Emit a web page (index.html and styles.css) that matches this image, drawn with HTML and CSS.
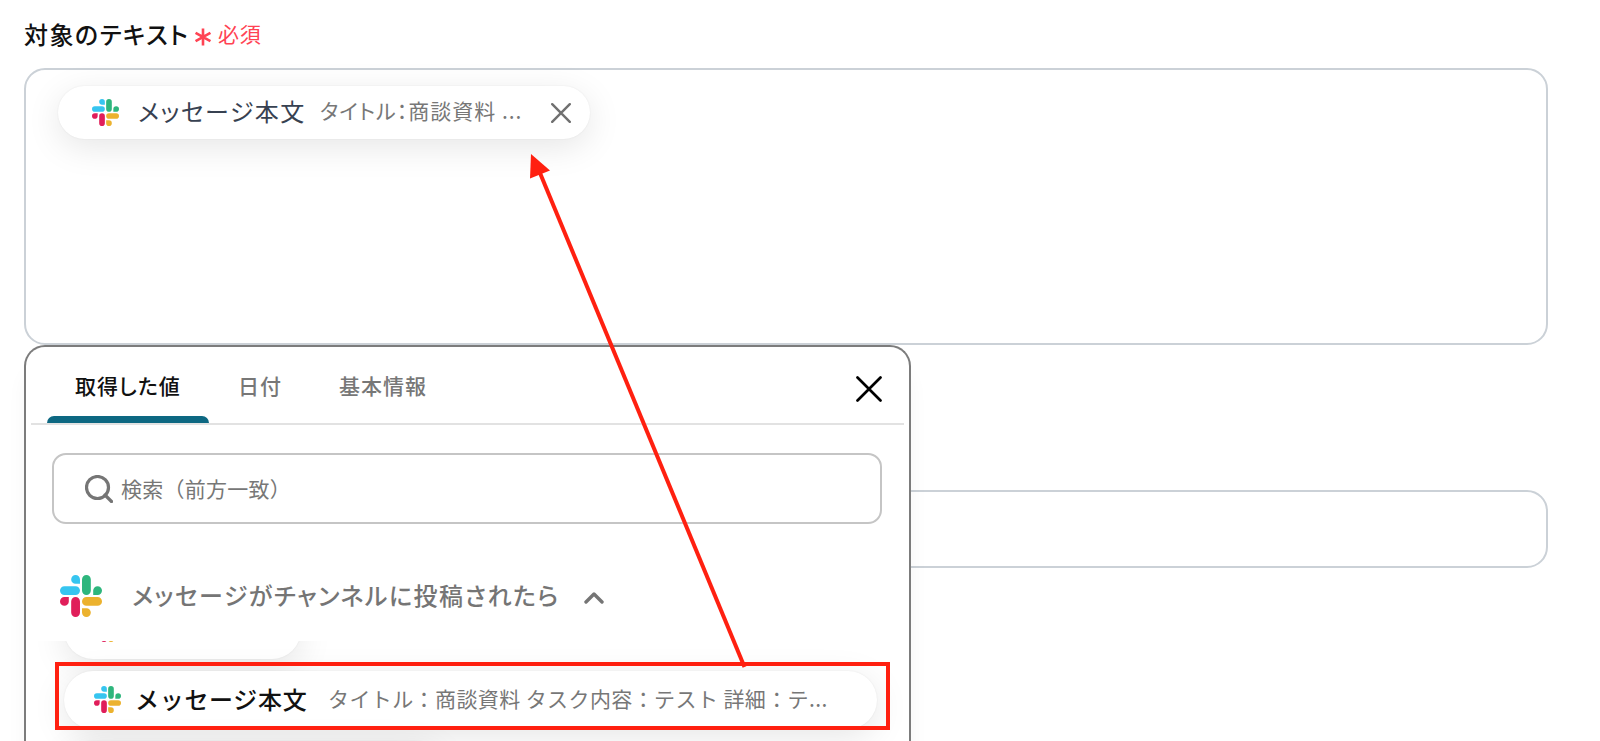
FILE: index.html
```html
<!DOCTYPE html>
<html lang="ja">
<head>
    <meta charset="UTF-8">
    <meta name="viewport" content="width=device-width, initial-scale=1.0">
    <title>対象のテキスト</title>
    <link rel="stylesheet" href="styles.css">
</head>
<body>
    <!-- Shared icons -->
    <svg class="symbols" width="0" height="0">
        <symbol id="slack" viewBox="0 0 124 124">
            <path fill="#E01E5A" d="M26 78a13 13 0 1 1-13-13h13zM33 78a13 13 0 0 1 26 0v33a13 13 0 0 1-26 0z"/>
            <path fill="#36C5F0" d="M46 26a13 13 0 1 1 13-13v13zM46 33a13 13 0 0 1 0 26H13a13 13 0 0 1 0-26z"/>
            <path fill="#2EB67D" d="M98 46a13 13 0 1 1 13 13H98zM91 46a13 13 0 0 1-26 0V13a13 13 0 0 1 26 0z"/>
            <path fill="#ECB22E" d="M78 98a13 13 0 1 1-13 13V98zM78 91a13 13 0 0 1 0-26h33a13 13 0 0 1 0 26z"/>
        </symbol>
    </svg>

    <main class="form">
        <div class="field-label">
            <span class="label-text">対象のテキスト</span>
            <svg class="asterisk" viewBox="0 0 16 18"><path d="M8 .5v17M.6 4.800l14.800 8.400M15.400 4.800l-14.800 8.400"/></svg>
            <span class="required">必須</span>
        </div>

        <div class="text-field">
            <div class="chip">
                <svg class="chip-icon"><use href="#slack"/></svg>
                <span class="chip-name">メッセージ本文</span>
                <span class="chip-value">タイトル：商談資料 ...</span>
                <svg class="chip-close" viewBox="0 0 20 20"><path d="M1.2 1.2l17.6 17.6M18.8 1.2L1.2 18.8"/></svg>
            </div>
        </div>

        <div class="input-field"></div>

        <!-- Value picker -->
        <div class="picker">
            <div class="tabs">
                <div class="tab active">取得した値</div>
                <div class="tab tab-date">日付</div>
                <div class="tab tab-basic">基本情報</div>
                <svg class="picker-close" viewBox="0 0 26 26"><path d="M1.5 1.5l23 23M24.5 1.5l-23 23"/></svg>
            </div>

            <div class="search">
                <svg class="search-icon" viewBox="0 0 28 28"><circle cx="12.5" cy="12.5" r="11"/><path d="M20 20l6.500 6.500"/></svg>
                <span class="search-text">検索（前方一致）</span>
            </div>

            <div class="group">
                <svg class="group-icon"><use href="#slack"/></svg>
                <span class="group-name">メッセージがチャンネルに投稿されたら</span>
                <svg class="chevron" viewBox="0 0 20 12"><path d="M2 10l8-8 8 8"/></svg>
            </div>

            <div class="values">
                <div class="value value-previous">
                    <svg class="chip-icon"><use href="#slack"/></svg>
                </div>
                <div class="value">
                    <svg class="chip-icon"><use href="#slack"/></svg>
                    <span class="value-name">メッセージ本文</span>
                    <span class="value-text">タイトル：商談資料 タスク内容：テスト 詳細：テ...</span>
                </div>
                <div class="value value-next"></div>
            </div>
        </div>
    </main>

    <!-- Annotations -->
    <div class="highlight"></div>
    <svg class="arrow" viewBox="0 0 1600 741">
        <path class="arrow-line" d="M540 173L744.5 667"/>
        <path class="arrow-head" d="M531 154l19 16.500-20 8z"/>
    </svg>
</body>
</html>
```

FILE: styles.css
```css
* {
    margin: 0;
    padding: 0;
    box-sizing: border-box;
}

body {
    position: relative;
    height: 741px;
    overflow: hidden;
    background-color: #fff;
    font-family: 'Noto Sans CJK JP', sans-serif;
    color: #111;
}

svg {
    display: block;
    flex-shrink: 0;
    fill: none;
    stroke-linecap: round;
    stroke-linejoin: round;
}

span,
.tab {
    white-space: nowrap;
}

.symbols {
    position: absolute;
}

.form {
    position: relative;
    width: 1548px;
    padding-left: 24px;
}

/* Label */
.field-label {
    display: flex;
    align-items: center;
    height: 68px;
    padding-bottom: 2px;
}

.label-text {
    width: 171px;
    font-size: 24px;
    font-weight: 500;
    letter-spacing: 1.5px;
    font-feature-settings: 'palt';
}

.asterisk {
    width: 16px;
    height: 18px;
    margin-top: 7px;
    margin-right: 7px;
    stroke: #ff4353;
    stroke-width: 2.6;
    stroke-linecap: butt;
}

.required {
    font-size: 21px;
    letter-spacing: 0.8px;
    color: #ff4353;
}

/* Fields */
.text-field {
    height: 277px;
    padding: 16px 32px;
    border: 2px solid #cbd1d7;
    border-radius: 21px;
}

.input-field {
    height: 78px;
    margin-top: 145px;
    border: 2px solid #cbd1d7;
    border-radius: 21px;
}

.chip,
.value {
    display: flex;
    align-items: center;
    background: #fff;
    border-radius: 29px;
    box-shadow: 0 0 2px rgba(0, 0, 0, 0.07), 0 8px 34px rgba(0, 0, 0, 0.1);
}

.chip {
    width: 532px;
    height: 53px;
    padding-left: 34px;
}

.chip-icon {
    width: 27px;
    height: 27px;
}

.chip-name {
    width: 182px;
    margin-left: 19px;
    padding-bottom: 4px;
    font-size: 24px;
    letter-spacing: 1.5px;
    color: #374151;
    font-feature-settings: 'palt';
}

.chip-value {
    width: 231px;
    padding-bottom: 5px;
    font-size: 21px;
    letter-spacing: 1px;
    color: #777;
    font-feature-settings: 'palt';
}

.chip-close {
    width: 20px;
    height: 20px;
    stroke: #707070;
    stroke-width: 2.4;
}

/* Picker */
.picker {
    position: absolute;
    top: 345px;
    left: 24px;
    width: 887px;
    height: 396px;
    border: 2px solid #7c7c7c;
    border-bottom: none;
    border-radius: 21px 21px 0 0;
    background: #fff;
    box-shadow: 0 24px 20px rgba(0, 0, 0, 0.04);
}

.tabs {
    display: flex;
    height: 78px;
    margin: 0 5px;
    padding-left: 16px;
    border-bottom: 2px solid #e2e2e2;
}

.tab {
    padding-top: 23px;
    font-size: 21px;
    line-height: 30px;
    font-weight: 500;
    letter-spacing: 1px;
    color: #777;
    font-feature-settings: 'palt';
}

.active {
    display: flex;
    flex-direction: column;
    justify-content: space-between;
    width: 162px;
    padding-left: 28px;
    color: #111;
}

.active::after {
    content: '';
    height: 7px;
    margin-left: -28px;
    border-radius: 7px 7px 0 0;
    background: #0d6882;
}

.tab-date {
    margin-left: 29px;
}

.tab-basic {
    margin-left: 57px;
}

.picker-close {
    width: 26px;
    height: 26px;
    margin: 29px 22px 0 auto;
    stroke: #000;
    stroke-width: 2.7;
}

.search {
    display: flex;
    align-items: center;
    width: 830px;
    height: 71px;
    margin: 28px 0 0 26px;
    padding-left: 31px;
    border: 2px solid #c5c5c5;
    border-radius: 14px;
}

.search-icon {
    width: 28px;
    height: 28px;
    stroke: #757575;
    stroke-width: 3.2;
}

.search-text {
    margin-left: 8px;
    padding-bottom: 2px;
    font-size: 21px;
    letter-spacing: 0.25px;
    color: #777;
}

.group {
    display: flex;
    align-items: center;
    height: 117px;
    padding: 35px 0 8px 34px;
}

.group-icon {
    width: 42px;
    height: 42px;
}

.group-name {
    width: 452px;
    margin-left: 30px;
    padding-bottom: 3px;
    font-size: 24px;
    font-weight: 500;
    letter-spacing: 1.5px;
    color: #757575;
    font-feature-settings: 'palt';
}

.chevron {
    width: 20px;
    height: 12px;
    margin-top: 4px;
    stroke: #757575;
    stroke-width: 3.4;
}

.values {
    height: 100px;
    padding: 0 32px 0 38px;
    overflow: hidden;
}

.value {
    width: 813px;
    height: 58px;
    margin-bottom: 12px;
    padding-left: 30px;
    padding-bottom: 1px;
}

.value-previous {
    width: 237px;
    margin-top: -40px;
    padding-bottom: 4px;
}

.value-name {
    width: 193px;
    margin-left: 14px;
    padding-bottom: 3px;
    font-size: 24px;
    font-weight: 500;
    letter-spacing: 0.7px;
}

.value-text {
    padding-bottom: 3px;
    font-size: 21px;
    letter-spacing: 0.4px;
    color: #777;
}

.value-next {
    width: 380px;
}

/* Annotations */
.highlight {
    position: absolute;
    top: 662px;
    left: 55px;
    width: 835px;
    height: 68px;
    border: 4px solid #ff2010;
}

.arrow {
    position: absolute;
    top: 0;
    left: 0;
    width: 1600px;
    height: 741px;
}

.arrow-line {
    stroke: #ff2010;
    stroke-width: 4;
    stroke-linecap: butt;
}

.arrow-head {
    fill: #ff2010;
}
```
